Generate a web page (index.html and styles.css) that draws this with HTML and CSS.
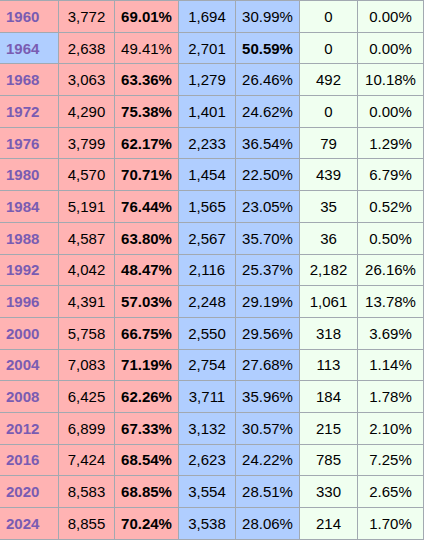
FILE: index.html
```html
<!DOCTYPE html>
<html lang="en">
<head>
  <meta charset="UTF-8" />
  <meta name="viewport" content="width=device-width, initial-scale=1.0" />
  <title>Presidential election results</title>
  <link rel="stylesheet" href="styles.css">
</head>
<body>

  <table class="results">
    <colgroup>
      <col class="c-year">
      <col class="c-votes">
      <col class="c-pct">
      <col class="c-votes2">
      <col class="c-pct">
      <col class="c-votes3">
      <col class="c-pct3">
    </colgroup>
    <tbody>
      <tr><th class="rep"><a href="#">1960</a></th><td class="rep">3,772</td><td class="rep"><b>69.01%</b></td><td class="dem">1,694</td><td class="dem">30.99%</td><td class="oth">0</td><td class="oth">0.00%</td></tr>
      <tr><th class="dem"><a href="#">1964</a></th><td class="rep">2,638</td><td class="rep">49.41%</td><td class="dem">2,701</td><td class="dem"><b>50.59%</b></td><td class="oth">0</td><td class="oth">0.00%</td></tr>
      <tr><th class="rep"><a href="#">1968</a></th><td class="rep">3,063</td><td class="rep"><b>63.36%</b></td><td class="dem">1,279</td><td class="dem">26.46%</td><td class="oth">492</td><td class="oth">10.18%</td></tr>
      <tr><th class="rep"><a href="#">1972</a></th><td class="rep">4,290</td><td class="rep"><b>75.38%</b></td><td class="dem">1,401</td><td class="dem">24.62%</td><td class="oth">0</td><td class="oth">0.00%</td></tr>
      <tr><th class="rep"><a href="#">1976</a></th><td class="rep">3,799</td><td class="rep"><b>62.17%</b></td><td class="dem">2,233</td><td class="dem">36.54%</td><td class="oth">79</td><td class="oth">1.29%</td></tr>
      <tr><th class="rep"><a href="#">1980</a></th><td class="rep">4,570</td><td class="rep"><b>70.71%</b></td><td class="dem">1,454</td><td class="dem">22.50%</td><td class="oth">439</td><td class="oth">6.79%</td></tr>
      <tr><th class="rep"><a href="#">1984</a></th><td class="rep">5,191</td><td class="rep"><b>76.44%</b></td><td class="dem">1,565</td><td class="dem">23.05%</td><td class="oth">35</td><td class="oth">0.52%</td></tr>
      <tr><th class="rep"><a href="#">1988</a></th><td class="rep">4,587</td><td class="rep"><b>63.80%</b></td><td class="dem">2,567</td><td class="dem">35.70%</td><td class="oth">36</td><td class="oth">0.50%</td></tr>
      <tr><th class="rep"><a href="#">1992</a></th><td class="rep">4,042</td><td class="rep"><b>48.47%</b></td><td class="dem">2,116</td><td class="dem">25.37%</td><td class="oth">2,182</td><td class="oth">26.16%</td></tr>
      <tr><th class="rep"><a href="#">1996</a></th><td class="rep">4,391</td><td class="rep"><b>57.03%</b></td><td class="dem">2,248</td><td class="dem">29.19%</td><td class="oth">1,061</td><td class="oth">13.78%</td></tr>
      <tr><th class="rep"><a href="#">2000</a></th><td class="rep">5,758</td><td class="rep"><b>66.75%</b></td><td class="dem">2,550</td><td class="dem">29.56%</td><td class="oth">318</td><td class="oth">3.69%</td></tr>
      <tr><th class="rep"><a href="#">2004</a></th><td class="rep">7,083</td><td class="rep"><b>71.19%</b></td><td class="dem">2,754</td><td class="dem">27.68%</td><td class="oth">113</td><td class="oth">1.14%</td></tr>
      <tr><th class="rep"><a href="#">2008</a></th><td class="rep">6,425</td><td class="rep"><b>62.26%</b></td><td class="dem">3,711</td><td class="dem">35.96%</td><td class="oth">184</td><td class="oth">1.78%</td></tr>
      <tr><th class="rep"><a href="#">2012</a></th><td class="rep">6,899</td><td class="rep"><b>67.33%</b></td><td class="dem">3,132</td><td class="dem">30.57%</td><td class="oth">215</td><td class="oth">2.10%</td></tr>
      <tr><th class="rep"><a href="#">2016</a></th><td class="rep">7,424</td><td class="rep"><b>68.54%</b></td><td class="dem">2,623</td><td class="dem">24.22%</td><td class="oth">785</td><td class="oth">7.25%</td></tr>
      <tr><th class="rep"><a href="#">2020</a></th><td class="rep">8,583</td><td class="rep"><b>68.85%</b></td><td class="dem">3,554</td><td class="dem">28.51%</td><td class="oth">330</td><td class="oth">2.65%</td></tr>
      <tr><th class="rep"><a href="#">2024</a></th><td class="rep">8,855</td><td class="rep"><b>70.24%</b></td><td class="dem">3,538</td><td class="dem">28.06%</td><td class="oth">214</td><td class="oth">1.70%</td></tr>
    </tbody>
  </table>

</body>
</html>
```

FILE: styles.css
```css
* {
  box-sizing: border-box;
}

body {
  margin: 0;
  background: #fff;
  font-family: "Liberation Sans", Arial, sans-serif;
  font-size: 15px;
  color: #000;
}

.results {
  border-collapse: collapse;
  table-layout: fixed;
  width: 424px;
  margin-left: -1px;
}

.c-year { width: 59px; }
.c-votes { width: 56px; }
.c-pct { width: 64px; }
.c-votes2 { width: 57px; }
.c-votes3 { width: 58px; }
.c-pct3 { width: 66px; }

.results tr {
  height: 31.7px;
}

.results th,
.results td {
  border: 1px solid #a2a9b1;
  padding: 0 1px;
  text-align: center;
  font-weight: normal;
  white-space: nowrap;
}

.results th {
  text-align: left;
  padding-left: 6px;
}

.results th a {
  color: #795cb2;
  font-weight: bold;
  text-decoration: none;
}

.rep { background: #ffb3b3; }
.dem { background: #b0ceff; }
.oth { background: #f0fff0; }
```
